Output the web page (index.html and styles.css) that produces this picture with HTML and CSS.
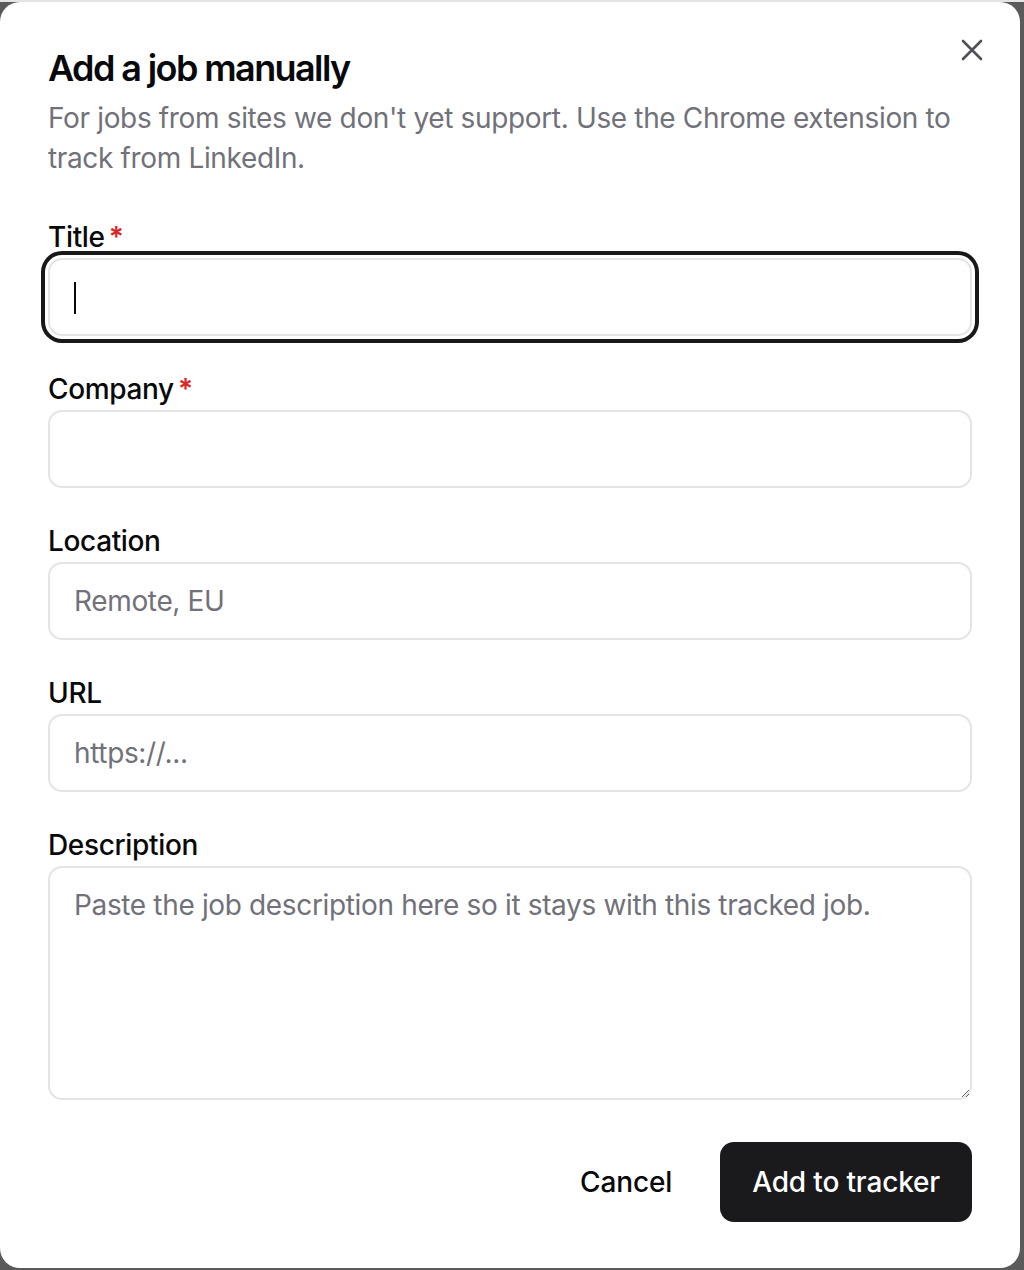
FILE: index.html
```html
<!DOCTYPE html>
<html lang="en">
<head>
<meta charset="utf-8">
<title>Add a job manually</title>
<link rel="stylesheet" href="styles.css">
</head>
<body>
<div class="dialog" role="dialog" aria-labelledby="dlg-title">
  <button class="close" type="button" aria-label="Close">
    <svg width="22" height="22" viewBox="0 0 22 22" fill="none" stroke="currentColor" stroke-width="2.6" stroke-linecap="round">
      <path d="M2 2 L20 20 M20 2 L2 20"/>
    </svg>
  </button>
  <h2 id="dlg-title" class="title">Add a job manually</h2>
  <p class="subtitle">For jobs from sites we don't yet support. Use the Chrome extension to track from LinkedIn.</p>

  <form class="form">
    <div class="field">
      <label class="label" for="f-title">Title<span class="req">*</span></label>
      <div class="input-wrap">
        <input id="f-title" class="input is-focused" type="text">
        <span class="caret"></span>
      </div>
    </div>
    <div class="field">
      <label class="label" for="f-company">Company<span class="req">*</span></label>
      <input id="f-company" class="input" type="text">
    </div>
    <div class="field">
      <label class="label" for="f-location">Location</label>
      <input id="f-location" class="input" type="text" placeholder="Remote, EU">
    </div>
    <div class="field">
      <label class="label" for="f-url">URL</label>
      <input id="f-url" class="input" type="text" placeholder="https://...">
    </div>
    <div class="field">
      <label class="label" for="f-desc">Description</label>
      <textarea id="f-desc" class="input textarea" placeholder="Paste the job description here so it stays with this tracked job."></textarea>
    </div>
    <div class="actions">
      <button type="button" class="btn btn-ghost">Cancel</button>
      <button type="button" class="btn btn-primary">Add to tracker</button>
    </div>
  </form>
</div>
</body>
</html>
```
FILE: styles.css
```css
* { box-sizing: border-box; }

html, body {
  margin: 0;
  padding: 0;
}

body {
  width: 1024px;
  height: 1270px;
  overflow: hidden;
  background: linear-gradient(#e4e4e4 0 2px, #5a5a5a 2px);
  font-family: Inter, "Noto Sans", "Liberation Sans", sans-serif;
  color: #09090b;
  padding-top: 2px;
  letter-spacing: -0.35px;
}

.dialog {
  position: relative;
  width: 1020px;
  height: 1266px;
  background: #ffffff;
  border-radius: 20px;
  padding: 46px 48px 46px 48px;
}

.close {
  position: absolute;
  top: 37px;
  right: 37px;
  width: 22px;
  height: 22px;
  padding: 0;
  border: 0;
  background: transparent;
  color: #505056;
  display: flex;
  align-items: center;
  justify-content: center;
  cursor: pointer;
}

.title {
  margin: 0;
  font-size: 36px;
  line-height: 40px;
  font-weight: 600;
  letter-spacing: -1.6px;
  color: #09090b;
}

.subtitle {
  margin: 10px 0 0 0;
  font-size: 28px;
  line-height: 40px;
  color: #71717a;
  max-width: 924px;
}

.form {
  margin-top: 37px;
  display: flex;
  flex-direction: column;
  gap: 31px;
}

.field {
  display: flex;
  flex-direction: column;
  gap: 1px;
}

.label {
  padding-top: 2px;
  font-size: 28px;
  line-height: 40px;
  font-weight: 500;
  color: #09090b;
}

.req {
  color: #dc2626;
  margin-left: 4px;
  font-weight: 600;
}

.input-wrap {
  position: relative;
}

.input {
  display: block;
  width: 100%;
  height: 78px;
  border: 2px solid #e4e4e7;
  border-radius: 14px;
  background: #ffffff;
  padding: 0 24px;
  font-family: inherit;
  font-size: 28px;
  letter-spacing: -0.35px;
  color: #09090b;
  outline: none;
}

.input::placeholder {
  color: #71717a;
  opacity: 1;
}

.input.is-focused {
  box-shadow: 0 0 0 3px #ffffff, 0 0 0 7px #18181b;
}

.caret {
  position: absolute;
  left: 26px;
  top: 24px;
  width: 2px;
  height: 32px;
  background: #09090b;
}

.textarea {
  height: 234px;
  padding: 17px 24px;
  line-height: 40px;
  resize: vertical;
}

.actions {
  margin-top: 11px;
  display: flex;
  justify-content: flex-end;
  gap: 16px;
}

.btn {
  height: 80px;
  padding: 0 32px;
  border-radius: 14px;
  border: 0;
  font-family: inherit;
  font-size: 28px;
  font-weight: 500;
  letter-spacing: -0.15px;
  cursor: pointer;
}

.btn-ghost {
  background: transparent;
  color: #09090b;
}

.btn-primary {
  background: #1a1a1c;
  color: #ffffff;
}
```
